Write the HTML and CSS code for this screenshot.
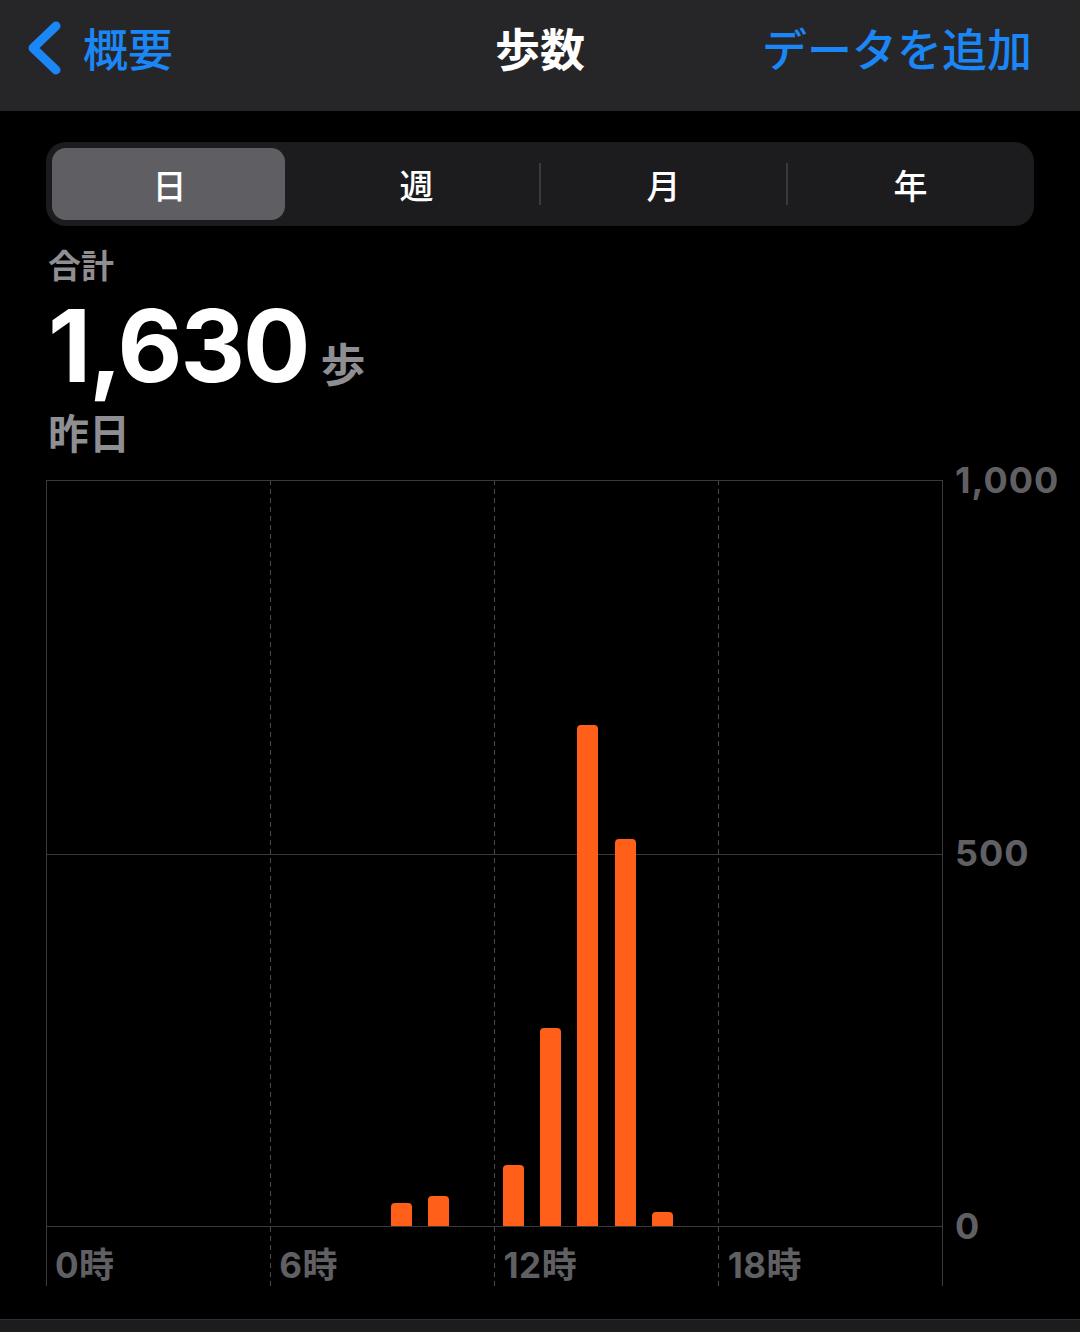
FILE: index.html
```
<!DOCTYPE html>
<html>
<head>
    <title>歩数</title>
    <link rel="stylesheet" href="styles.css">
</head>
<body>
    <div class="navbar">
        <div class="nav-left">
            <svg class="chevron" width="36" height="54" viewBox="0 0 36 54">
                <path d="M31 5 L8 27 L31 49" fill="none" stroke="#1b86f5" stroke-width="9" stroke-linecap="round" stroke-linejoin="round"/>
            </svg>
            <span class="nav-link">概要</span>
        </div>
        <div class="nav-title">歩数</div>
        <div class="nav-right">
            <span class="nav-link">データを追加</span>
        </div>
    </div>

    <div class="segments">
        <div class="segment active">日</div>
        <div class="segment">週</div>
        <div class="segment divided">月</div>
        <div class="segment divided">年</div>
    </div>

    <div class="summary">
        <div class="summary-label">合計</div>
        <div class="summary-value">1,630<span class="unit">歩</span></div>
        <div class="summary-date">昨日</div>
    </div>

    <div class="chart">
        <div class="plot">
            <div class="vlines">
                <div class="vcol"></div>
                <div class="vcol"></div>
                <div class="vcol"></div>
                <div class="vcol"></div>
            </div>
            <div class="bars" id="bars">
                <div class="midline"></div>
            </div>
            <div class="xlabels">
                <span>0時</span>
                <span>6時</span>
                <span>12時</span>
                <span>18時</span>
            </div>
        </div>
        <div class="yaxis">
            <span>1,000</span>
            <span>500</span>
            <span>0</span>
        </div>
    </div>

    <div class="bottom-bar"></div>

    <script>
        // steps per hour, yesterday
        const steps = [0, 0, 0, 0, 0, 0, 0, 0, 0, 31, 40, 0, 82, 266, 673, 519, 19, 0, 0, 0, 0, 0, 0, 0];
        const maxSteps = 1000;
        const bars = document.getElementById('bars');

        steps.forEach(value => {
            const slot = document.createElement('div');
            slot.className = 'slot';
            if (value > 0) {
                const bar = document.createElement('div');
                bar.className = 'bar';
                bar.style.height = (value / maxSteps * 100) + '%';
                slot.appendChild(bar);
            }
            bars.appendChild(slot);
        });
    </script>
</body>
</html>
```

FILE: styles.css
```
body {
    margin: 0;
    padding: 0;
    width: 1080px;
    height: 1332px;
    overflow: hidden;
    background-color: #000;
    color: #fff;
    font-family: 'Inter', 'Noto Sans CJK JP', sans-serif;
    position: relative;
}

.navbar {
    height: 111px;
    box-sizing: border-box;
    padding: 0 25px 15px 25px;
    background-color: #262628;
    display: grid;
    grid-template-columns: 1fr auto 1fr;
    align-items: center;
}

.nav-left {
    display: flex;
    align-items: center;
    gap: 22px;
}

.chevron {
    display: block;
}

.nav-link {
    color: #1b86f5;
    font-size: 45px;
    font-weight: 500;
    line-height: 54px;
    font-family: 'Noto Sans CJK JP', sans-serif;
}

.nav-title {
    font-family: 'Noto Sans CJK JP', sans-serif;
    font-size: 45px;
    font-weight: bold;
    line-height: 54px;
    text-align: center;
}

.nav-right {
    display: flex;
    justify-content: flex-end;
    padding-right: 23px;
}

.segments {
    margin: 31px 46px 0;
    height: 84px;
    box-sizing: border-box;
    padding: 6px 0;
    background-color: #1c1c1e;
    border-radius: 20px;
    display: grid;
    grid-template-columns: repeat(4, 1fr);
}

.segment {
    display: flex;
    align-items: center;
    justify-content: center;
    font-family: 'Noto Sans CJK JP', sans-serif;
    font-size: 34px;
    font-weight: 500;
    position: relative;
}

.segment.active::before {
    content: '';
    position: absolute;
    top: 0;
    bottom: 0;
    left: 6px;
    right: 8px;
    background-color: #5f5f63;
    border-radius: 14px;
    z-index: -1;
}

.segment.active {
    z-index: 0;
}

.segment.divided::before {
    content: '';
    position: absolute;
    left: -1px;
    top: 15px;
    bottom: 15px;
    width: 2px;
    background-color: #3a3a3c;
}

.summary {
    padding: 0 48px;
    margin-top: 20px;
}

.summary-label {
    color: #8e8e93;
    font-size: 33px;
    font-weight: bold;
    line-height: 40px;
}

.summary-value {
    margin-top: 10px;
    font-size: 100px;
    font-weight: bold;
    line-height: 100px;
    letter-spacing: -2px;
}

.unit {
    color: #8e8e93;
    font-size: 45px;
    margin-left: 12px;
    letter-spacing: 0;
}

.summary-date {
    margin-top: -6px;
    color: #8e8e93;
    font-size: 41px;
    font-weight: bold;
    line-height: 48px;
}

.chart {
    display: flex;
    margin: 22px 0 0 46px;
}

.plot {
    position: relative;
    width: 897px;
}

.vlines {
    position: absolute;
    top: 0;
    left: 0;
    right: 0;
    bottom: 0;
    display: flex;
    border-right: 1px solid #3a3a3c;
}

.vcol {
    flex: 1;
    position: relative;
}

.vcol::before {
    content: '';
    position: absolute;
    left: 0;
    top: 0;
    bottom: 0;
    width: 1px;
    background: repeating-linear-gradient(to bottom, #4a4a4d 0 5px, transparent 5px 9px);
}

.vcol:first-child::before {
    background: #3a3a3c;
}

.bars {
    position: relative;
    height: 745px;
    border-top: 1px solid #3a3a3c;
    border-bottom: 1px solid #3a3a3c;
    display: flex;
    align-items: flex-end;
}

.midline {
    position: absolute;
    left: 0;
    right: 0;
    top: 50%;
    height: 1px;
    background-color: #3a3a3c;
}

.slot {
    flex: 1;
    height: 100%;
    display: flex;
    justify-content: center;
    align-items: flex-end;
}

.bar {
    position: relative;
    width: 21px;
    background-color: #ff5f18;
    border-radius: 4px 4px 0 0;
}

.xlabels {
    display: flex;
    height: 59px;
    box-sizing: border-box;
    padding-top: 18px;
}

.xlabels span {
    flex: 1;
    padding-left: 9px;
    color: #606064;
    font-size: 35px;
    font-weight: bold;
    line-height: 40px;
    letter-spacing: 0.5px;
}

.yaxis {
    margin: -18px 0 0 12px;
    height: 782px;
    display: flex;
    flex-direction: column;
    justify-content: space-between;
    color: #606064;
    font-size: 36px;
    font-weight: bold;
    line-height: 36px;
    letter-spacing: 1px;
}

.bottom-bar {
    position: absolute;
    left: 0;
    right: 0;
    bottom: 0;
    height: 12px;
    background-color: #1c1c1e;
    border-top: 1px solid #2e2e30;
}
```
